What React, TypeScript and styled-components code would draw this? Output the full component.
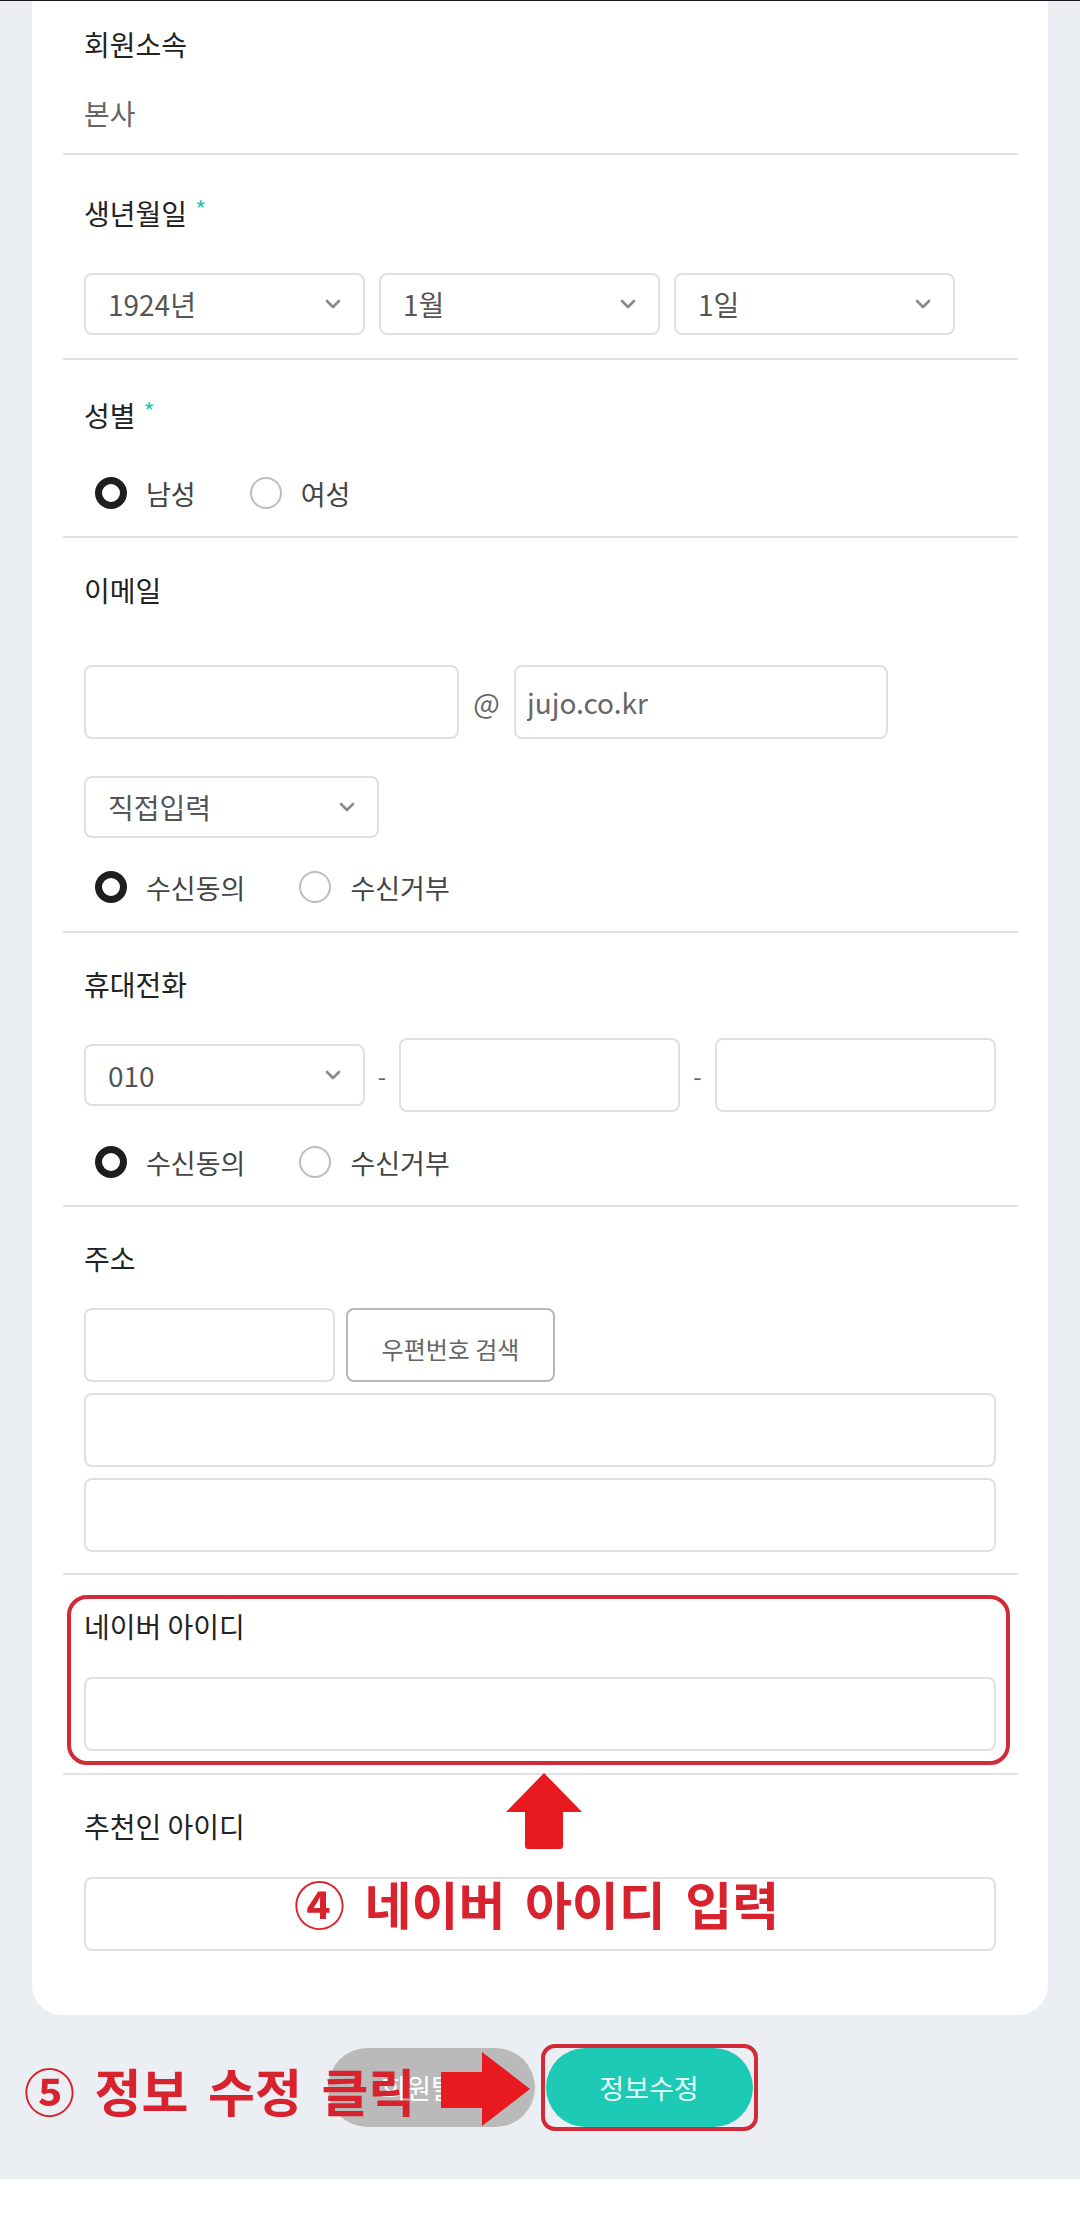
import React from "react";
import styled, { createGlobalStyle } from "styled-components";

const GlobalStyle = createGlobalStyle`
  html, body { margin: 0; padding: 0; background: #ffffff; }
  body { font-family: "Noto Sans CJK KR", "Noto Sans", sans-serif; }
  * { box-sizing: border-box; }
`;

const Page = styled.div`
  width: 1080px;
  background: #ebeef3;
  border-top: 1px solid #1a1a1a;
`;

const Card = styled.div`
  margin: 0 32px;
  background: #ffffff;
  border-radius: 0 0 30px 30px;
  padding: 0 30px 0 31px;
`;

const Section = styled.section<{ $pt: number; $pb: number; $last?: boolean }>`
  position: relative;
  display: flex;
  flex-direction: column;
  padding: ${(p) => p.$pt}px 22px ${(p) => p.$pb}px 21px;
  border-bottom: ${(p) => (p.$last ? "none" : "2px solid #e2e2e2")};
`;

const Label = styled.div`
  height: 40px;
  line-height: 40px;
  font-size: 28px;
  color: #222222;
  white-space: nowrap;
`;

const Req = styled.span`
  margin-left: 8px;
  font-size: 24px;
  color: #1dcab5;
  vertical-align: top;
  position: relative;
  top: -4px;
`;

const Value = styled.div<{ $mt: number }>`
  margin-top: ${(p) => p.$mt}px;
  height: 40px;
  line-height: 40px;
  font-size: 28px;
  color: #666666;
`;

const Row = styled.div<{ $mt: number; $gap?: number }>`
  margin-top: ${(p) => p.$mt}px;
  display: flex;
  align-items: center;
  gap: ${(p) => p.$gap ?? 0}px;
`;

const SelectBox = styled.div<{ $w: number }>`
  width: ${(p) => p.$w}px;
  height: 62px;
  flex: none;
  display: flex;
  align-items: center;
  justify-content: space-between;
  padding: 0 22px;
  border: 2px solid #e0e0e0;
  border-radius: 8px;
  background: #ffffff;
  font-size: 28px;
  color: #555555;
`;

const TextInput = styled.input<{ $w?: number }>`
  width: ${(p) => (p.$w ? `${p.$w}px` : "100%")};
  height: 74px;
  flex: none;
  padding: 0 11px;
  border: 2px solid #e0e0e0;
  border-radius: 8px;
  background: #ffffff;
  font-family: inherit;
  font-size: 28px;
  color: #666666;
  outline: none;
`;

const Sep = styled.span<{ $w: number; $size: number }>`
  width: ${(p) => p.$w}px;
  flex: none;
  text-align: center;
  font-size: ${(p) => p.$size}px;
  color: #666666;
`;

const SearchButton = styled.button`
  width: 209px;
  height: 74px;
  flex: none;
  border: 2px solid #b8b8b8;
  border-radius: 8px;
  background: #ffffff;
  font-family: inherit;
  font-size: 24px;
  color: #666666;
  padding: 6px 0 0;
`;

const RadioRow = styled.div<{ $mt: number }>`
  margin-top: ${(p) => p.$mt}px;
  height: 40px;
  display: flex;
  align-items: center;
  gap: 54px;
  padding-left: 11px;
`;

const RadioOption = styled.label`
  display: flex;
  align-items: center;
  gap: 19px;
  font-size: 27px;
  color: #444444;
`;

const RadioDot = styled.span<{ $on?: boolean }>`
  width: 32px;
  height: 32px;
  border-radius: 50%;
  flex: none;
  background: #ffffff;
  border: ${(p) => (p.$on ? "7px solid #1e1e1e" : "2px solid #bdbdbd")};
`;

const Footer = styled.div`
  position: relative;
  padding: 33px 0 52px;
  display: flex;
  justify-content: center;
  gap: 11px;
`;

const Pill = styled.button<{ $primary?: boolean }>`
  width: 207px;
  height: 79px;
  border: none;
  border-radius: 40px;
  background: ${(p) => (p.$primary ? "#1dcab5" : "#bababa")};
  color: ${(p) => (p.$primary ? "#e9fffb" : "#ffffff")};
  font-family: inherit;
  font-size: 27px;
`;

const RedFrame = styled.div<{ $radius: number }>`
  position: absolute;
  border: 4px solid #d22a36;
  border-radius: ${(p) => p.$radius}px;
  pointer-events: none;
`;

const NaverFrame = styled(RedFrame)`
  top: 20px;
  left: 4px;
  right: 8px;
  bottom: 8px;
`;

const SubmitFrame = styled(RedFrame)`
  top: 29px;
  left: 541px;
  width: 217px;
  height: 87px;
`;

const Callout = styled.div<{ $left: number; $top: number }>`
  position: absolute;
  left: ${(p) => p.$left}px;
  top: ${(p) => p.$top}px;
  height: 56px;
  line-height: 56px;
  font-size: 51px;
  font-weight: 700;
  color: #d8232e;
  white-space: nowrap;
  word-spacing: 8px;
  pointer-events: none;
`;

const ArrowSvg = styled.svg<{ $left: number; $top: number }>`
  position: absolute;
  left: ${(p) => p.$left}px;
  top: ${(p) => p.$top}px;
  pointer-events: none;
`;

const Chevron = () => (
  <svg width="16" height="10" viewBox="0 0 16 10">
    <path d="M2 2 L8 8 L14 2" fill="none" stroke="#8a8a8a" strokeWidth="2.6" strokeLinecap="round" strokeLinejoin="round" />
  </svg>
);

const Select = ({ w, value }: { w: number; value: string }) => (
  <SelectBox $w={w}>
    <span>{value}</span>
    <Chevron />
  </SelectBox>
);

const Radios = ({ mt, a, b }: { mt: number; a: string; b: string }) => (
  <RadioRow $mt={mt}>
    <RadioOption>
      <RadioDot $on />
      {a}
    </RadioOption>
    <RadioOption>
      <RadioDot />
      {b}
    </RadioOption>
  </RadioRow>
);

export default function App() {
  return (
    <>
      <GlobalStyle />
      <Page>
        <Card>
          <Section $pt={23} $pb={20}>
            <Label>회원소속</Label>
            <Value $mt={29}>본사</Value>
          </Section>

          <Section $pt={38} $pb={23}>
            <Label>
              생년월일<Req>*</Req>
            </Label>
            <Row $mt={40} $gap={14}>
              <Select w={281} value="1924년" />
              <Select w={281} value="1월" />
              <Select w={281} value="1일" />
            </Row>
          </Section>

          <Section $pt={35} $pb={23}>
            <Label>
              성별<Req>*</Req>
            </Label>
            <Radios mt={38} a="남성" b="여성" />
          </Section>

          <Section $pt={32} $pb={24}>
            <Label>이메일</Label>
            <Row $mt={55}>
              <TextInput $w={375} />
              <Sep $w={55} $size={28}>@</Sep>
              <TextInput $w={374} defaultValue="jujo.co.kr" />
            </Row>
            <Row $mt={37}>
              <Select w={295} value="직접입력" />
            </Row>
            <Radios mt={29} a="수신동의" b="수신거부" />
          </Section>

          <Section $pt={31} $pb={23}>
            <Label>휴대전화</Label>
            <Row $mt={34}>
              <Select w={281} value="010" />
              <Sep $w={34} $size={24}>-</Sep>
              <TextInput $w={281} />
              <Sep $w={35} $size={24}>-</Sep>
              <TextInput $w={281} />
            </Row>
            <Radios mt={30} a="수신동의" b="수신거부" />
          </Section>

          <Section $pt={31} $pb={21}>
            <Label>주소</Label>
            <Row $mt={30} $gap={11}>
              <TextInput $w={251} />
              <SearchButton>우편번호 검색</SearchButton>
            </Row>
            <Row $mt={11}>
              <TextInput />
            </Row>
            <Row $mt={11}>
              <TextInput />
            </Row>
          </Section>

          <Section $pt={31} $pb={22}>
            <Label>네이버 아이디</Label>
            <Row $mt={31}>
              <TextInput />
            </Row>
            <NaverFrame $radius={20} />
          </Section>

          <Section $pt={31} $pb={64} $last>
            <Label>추천인 아이디</Label>
            <Row $mt={31}>
              <TextInput />
            </Row>
            <ArrowSvg $left={443} $top={-2} width="76" height="76" viewBox="0 0 76 76">
              <path d="M38 0 L76 39 L57 39 L57 73 Q57 76 54 76 L22 76 Q19 76 19 73 L19 39 L0 39 Z" fill="#e8191f" />
            </ArrowSvg>
            <Callout $left={231} $top={100}>④ 네이버 아이디 입력</Callout>
          </Section>
        </Card>

        <Footer>
          <Pill>회원탈퇴</Pill>
          <Pill $primary>정보수정</Pill>
          <Callout $left={24} $top={47}>⑤ 정보 수정 클릭</Callout>
          <ArrowSvg $left={441} $top={37} width="89" height="74" viewBox="0 0 89 74">
            <path d="M0 20 L41 20 L41 0 L89 37 L41 74 L41 56 L0 56 Z" fill="#e8191f" />
          </ArrowSvg>
          <SubmitFrame $radius={14} />
        </Footer>
      </Page>
    </>
  );
}
